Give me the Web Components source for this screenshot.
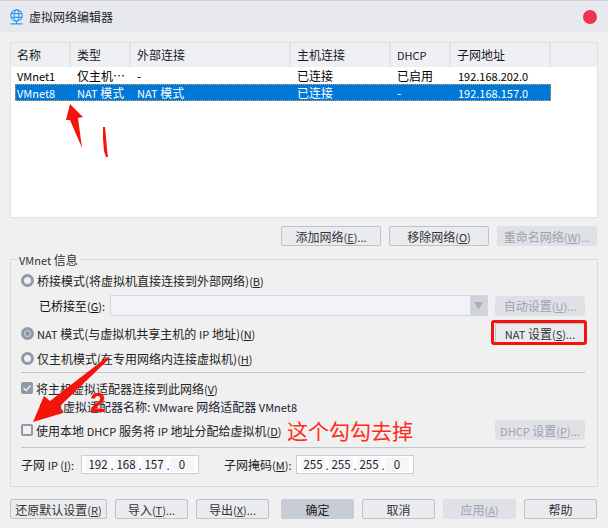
<!DOCTYPE html>
<html>
<head>
<meta charset="utf-8">
<title>虚拟网络编辑器</title>
<style>
  html, body { margin: 0; padding: 0; }
  body { width: 608px; height: 528px; overflow: hidden; background: #f0f0f0; }
</style>
</head>
<body>
<template id="win-tpl">
  <style>
    :host { display: flex; flex-direction: column; width: 608px; height: 528px; position: relative; background: #f0f0f0; color: #000;
      font: 12px "Noto Sans CJK SC", "Liberation Sans", sans-serif; overflow: hidden; }
    .title { height: 32px; flex: none; background: #e8e9ee; border-top: 1px solid #d5d2d4; box-sizing: border-box; display: flex; align-items: center; padding: 0 11px 0 10px; gap: 6px; font-size: 12px; color: #1c2530; }
    .title svg { flex: none; }
    .title span { flex: 1; }
    .close { width: 14px; height: 14px; border-radius: 50%; background: #f0324f; flex: none; }
    .body { flex: 1; display: flex; flex-direction: column; padding: 10px 10px 0 10px; }
  </style>
  <div class="title">
    <svg width="13" height="16" viewBox="0 0 13 16" fill="none" stroke="#2a9de8" stroke-width="1.1">
      <circle cx="6.5" cy="6.5" r="5.7"/><ellipse cx="6.5" cy="6.5" rx="2.4" ry="5.7"/><path d="M.8 4.6h11.4M.8 8.4h11.4M6.5 12.2v2.6M.5 14.9h12" />
    </svg>
    <span>虚拟网络编辑器</span>
    <div class="close"></div>
  </div>
  <div class="body"><slot></slot></div>
</template>

<template id="table-tpl">
  <style>
    :host { display: block; height: 176px; box-sizing: border-box; background: #fff; border: 1px solid #dfe1e6; flex: none; }
    .head, .row { display: grid; }
    .head { grid-template-columns: 60px 60px 160px 100px 60px 100px; height: 24px; background: #eff0f4; box-sizing: border-box; font-size: 12px; }
    .head div { padding-left: 6px; line-height: 24px; border-right: 2px solid #dfe1e7; box-sizing: border-box; color: #1a1a1a; }
    .rows { padding: 0 0 0 4px; }
    .row { grid-template-columns: 56px 60px 160px 100px 60px 100px; width: 536px; height: 17px; line-height: 17px; font-size: 12px; }
    .row div { padding-left: 6px; white-space: nowrap; overflow: hidden; }
    .row.sel { background: #0078d7; color: #fff; outline: 1px dotted #d8a05a; outline-offset: -1px; }
    .row div:nth-child(1) { padding-left: 2px; }
    .row div:nth-child(6) { padding-left: 7px; }
  </style>
  <div class="head">
    <div>名称</div><div>类型</div><div>外部连接</div><div>主机连接</div><div><vm-l>DHCP</vm-l></div><div>子网地址</div>
  </div>
  <div class="rows">
    <div class="row"><div><vm-l>VMnet1</vm-l></div><div>仅主机…</div><div>-</div><div>已连接</div><div>已启用</div><div><vm-l>192.168.202.0</vm-l></div></div>
    <div class="row sel"><div><vm-l>VMnet8</vm-l></div><div><vm-l>NAT</vm-l> 模式</div><div><vm-l>NAT</vm-l> 模式</div><div>已连接</div><div>-</div><div><vm-l>192.168.157.0</vm-l></div></div>
  </div>
</template>

<!-- no whitespace in this one, it would render as a space before the text -->
<template id="latin-tpl"><style>:host { display: inline; font-size: 11px; }</style><slot></slot></template>

<template id="btn-tpl">
  <style>
    :host { display: inline-flex; align-items: center; justify-content: center; height: 20px; box-sizing: border-box; border: 1px solid #bcc3cd; border-radius: 2px; background: #e9ebef; font-size: 12px; color: #333; white-space: nowrap; flex: none; }
    :host([disabled]) { background: #dfe1e6; border-color: #dfe1e6; color: #9aa2ad; }
    :host([primary]) { background: #c8ccd5; border-color: #c8ccd5; color: #222; }
  </style>
  <span><slot></slot></span>
</template>

<template id="group-tpl">
  <style>
    :host { display: block; position: relative; box-sizing: border-box; height: 228px; border: 1px solid #d8dade; margin-top: 13px; padding-top: 8px; }
    .legend { position: absolute; left: 6px; top: -9px; padding: 0 2px; background: #f0f0f0; font-size: 12px; line-height: 18px; color: #333; }
  </style>
  <div class="legend"><vm-l>VMnet</vm-l> 信息</div>
  <slot></slot>
</template>

<template id="opt-tpl">
  <style>
    :host { display: flex; align-items: center; height: 24px; padding-left: 10px; gap: 3px; font-size: 12px; color: #222; white-space: nowrap; }
    .radio { width: 13px; height: 13px; border-radius: 50%; box-sizing: border-box; border: 3px solid #8f9aa8; background: #f0f0f0; flex: none; }
    :host([checked]) .radio { background: #8f9aa8; box-shadow: inset 0 0 0 1px #d0d4da; }
    :host([kind=box]) .radio { width: 12px; height: 12px; border-radius: 2px; border-width: 2px; background: #f0f0f0; box-shadow: none; }
    :host([kind=box][checked]) .radio { background: #8f9aa8; }
    .check { display: none; }
    :host([kind=box][checked]) .check { display: block; margin: -2px; }
    .grow { flex: 1; }
    .end { display: flex; padding-right: 12px; }
  </style>
  <div class="radio"><svg class="check" width="12" height="12" viewBox="0 0 12 12" fill="none" stroke="#e6e8ec" stroke-width="1.6"><path d="M2.5 6l2.5 2.5 4.5-5"/></svg></div>
  <span><slot></slot></span>
  <div class="grow"></div>
  <div class="end"><slot name="end"></slot></div>
</template>

<template id="ip-tpl">
  <style>
    :host { display: inline-flex; align-items: center; height: 19px; box-sizing: border-box; width: 118px; background: #fff; border: 1px solid #c9ced6; padding: 0 4px; font-size: 11.5px; color: #222; flex: none; }
    span { width: 24px; text-align: center; background: #f5f6f9; height: 15px; line-height: 15px; flex: none; }
    i { font-style: normal; width: 4px; text-align: center; flex: none; }
  </style>
  <span></span><i>.</i><span></span><i>.</i><span></span><i>.</i><span></span>
</template>

<template id="marks-tpl">
  <style>
    :host { position: absolute; left: 0; top: 0; width: 608px; height: 528px; pointer-events: none; }
    svg { position: absolute; left: 0; top: 0; }
    .note { position: absolute; left: 287px; top: 417px; color: #ff2a1a; font: 21px/26px "Noto Sans CJK SC", sans-serif; white-space: nowrap; }
    .nat { position: absolute; left: 491px; top: 320px; width: 96px; height: 25px; box-sizing: border-box; border: 3px solid #f5140c; border-radius: 3px; }
    .two { position: absolute; left: 90px; top: 391px; height: 24px; color: #f5140c; font: 700 28px/24px "Liberation Sans", sans-serif; }
  </style>
  <svg width="608" height="528" viewBox="0 0 608 528" fill="#f5140c">
    <path d="M70 104L83 117 78 118 82 148 70 120 66 120Z"/>
    <path d="M103 127l2 0 1 10 1 12 1 8-2 0-2-6-1-12z"/>
    <path d="M107 357l2 2-49 47 3 7-30 9 11-26 6 5z"/>
  </svg>
  <div class="nat"></div>
  <div class="two">2</div>
  <div class="note">这个勾勾去掉</div>
</template>

<template id="row-tpl">
  <style>
    :host { display: flex; align-items: center; }
  </style>
  <slot></slot>
</template>

<vm-window>
  <vm-table></vm-table>
  <vm-row style="justify-content:flex-end;gap:8px;margin-top:8px;padding-right:1px">
    <vm-btn style="width:100px">添加网络<vm-l>(<u>E</u>)...</vm-l></vm-btn>
    <vm-btn style="width:100px">移除网络<vm-l>(<u>O</u>)</vm-l></vm-btn>
    <vm-btn disabled style="width:100px">重命名网络<vm-l>(<u>W</u>)...</vm-l></vm-btn>
  </vm-row>
  <vm-group>
    <vm-opt>桥接模式(将虚拟机直接连接到外部网络)<vm-l>(<u>B</u>)</vm-l></vm-opt>
    <vm-row style="height:21px;margin-top:3px;padding-left:28px;font-size:12px;color:#111">
      <span style="width:71px;white-space:nowrap">已桥接至<vm-l>(<u>G</u>):</vm-l></span>
      <div style="width:378px;height:21px;box-sizing:border-box;background:#f2f3f6;border:1px solid #d4d8de;display:flex;justify-content:flex-end"><div style="width:17px;background:#d0d3da;color:#a6aeb9;font-size:9px;text-align:center;line-height:20px">▼</div></div>
      <vm-btn disabled style="width:90px;margin-left:7px">自动设置<vm-l>(<u>U</u>)...</vm-l></vm-btn>
    </vm-row>
    <vm-opt checked style="margin-top:5px"><vm-l>NAT</vm-l> 模式(与虚拟机共享主机的 <vm-l>IP</vm-l> 地址)<vm-l>(<u>N</u>)</vm-l><vm-btn slot="end" style="width:90px"><vm-l>NAT</vm-l> 设置<vm-l>(<u>S</u>)...</vm-l></vm-btn></vm-opt>
    <vm-opt style="margin-top:1px">仅主机模式(在专用网络内连接虚拟机)<vm-l>(<u>H</u>)</vm-l></vm-opt>
    <div style="height:1px;background:#c0c4ca;margin:2px 12px 6px 10px"></div>
    <vm-opt kind="box" checked style="height:18px">将主机虚拟适配器连接到此网络<vm-l>(<u>V</u>)</vm-l></vm-opt>
    <div style="height:20px;line-height:20px;padding-left:28px;font-size:12px;color:#1a2030;white-space:nowrap">主机虚拟适配器名称: <vm-l>VMware</vm-l> 网络适配器 <vm-l>VMnet8</vm-l></div>
    <vm-opt kind="box" style="margin-top:1px">使用本地 <vm-l>DHCP</vm-l> 服务将 <vm-l>IP</vm-l> 地址分配给虚拟机<vm-l>(<u>D</u>)</vm-l><vm-btn slot="end" disabled style="width:90px"><vm-l>DHCP</vm-l> 设置<vm-l>(<u>P</u>)...</vm-l></vm-btn></vm-opt>
    <div style="height:1px;background:#c0c4ca;margin:5px 12px 7px 10px"></div>
    <vm-row style="padding-left:10px;font-size:12px;color:#222;white-space:nowrap">
      <span style="width:60px">子网 <vm-l>IP (<u>I</u>):</vm-l></span>
      <vm-ip value="192.168.157.0"></vm-ip>
      <span style="width:72px;margin-left:25px">子网掩码<vm-l>(<u>M</u>):</vm-l></span>
      <vm-ip value="255.255.255.0"></vm-ip>
    </vm-row>
  </vm-group>
  <vm-row style="gap:8px;margin-top:12px">
    <vm-btn style="width:97px">还原默认设置<vm-l>(<u>R</u>)</vm-l></vm-btn>
    <vm-btn style="width:73px">导入<vm-l>(<u>T</u>)...</vm-l></vm-btn>
    <vm-btn style="width:73px">导出<vm-l>(<u>X</u>)...</vm-l></vm-btn>
    <vm-btn primary style="width:73px;margin-left:4px">确定</vm-btn>
    <vm-btn style="width:73px">取消</vm-btn>
    <vm-btn disabled style="width:73px">应用<vm-l>(<u>A</u>)</vm-l></vm-btn>
    <vm-btn style="width:73px">帮助</vm-btn>
  </vm-row>
  <vm-marks></vm-marks>
</vm-window>

<script>
// small helper so each element below only has to name its template
function plain(tag, tplId) {
  customElements.define(tag, class extends HTMLElement {
    constructor() {
      super();
      this.attachShadow({ mode: 'open' });
      this.shadowRoot.appendChild(document.getElementById(tplId).content.cloneNode(true));
    }
  });
}

plain('vm-l', 'latin-tpl');
plain('vm-window', 'win-tpl');
plain('vm-table', 'table-tpl');
plain('vm-btn', 'btn-tpl');
plain('vm-group', 'group-tpl');
plain('vm-opt', 'opt-tpl');
plain('vm-row', 'row-tpl');
plain('vm-marks', 'marks-tpl');

class IpField extends HTMLElement {
  constructor() {
    super();
    this.attachShadow({ mode: 'open' });
    this.shadowRoot.appendChild(document.getElementById('ip-tpl').content.cloneNode(true));
  }
  connectedCallback() {
    const parts = this.getAttribute('value').split('.');
    this.shadowRoot.querySelectorAll('span').forEach((s, i) => { s.textContent = parts[i]; });
  }
}
customElements.define('vm-ip', IpField);
</script>
</body>
</html>
